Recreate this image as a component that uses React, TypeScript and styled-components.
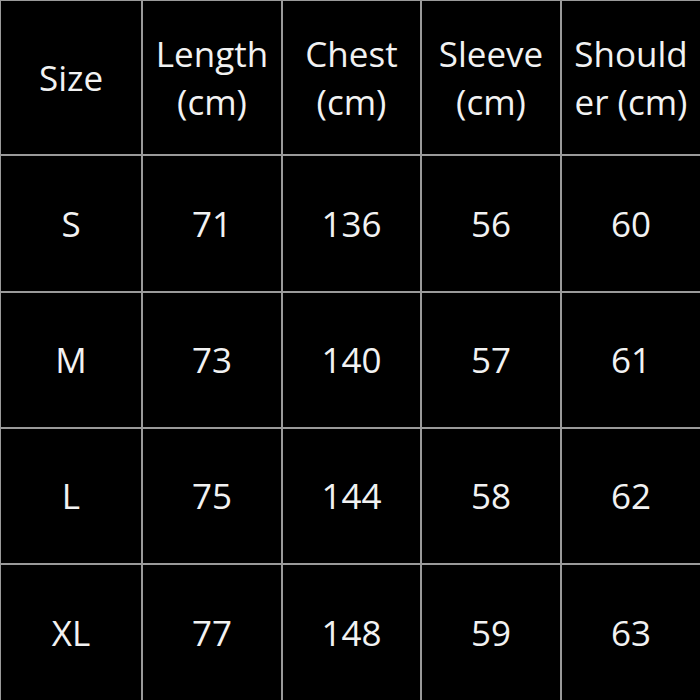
import React from 'react';
import styled, { createGlobalStyle } from 'styled-components';

const GlobalStyle = createGlobalStyle`
  html, body {
    margin: 0;
    padding: 0;
    background: #000;
  }
  body {
    font-family: "Open Sans", "Liberation Sans", sans-serif;
  }
`;

const Table = styled.div`
  width: 700px;
  height: 700px;
  box-sizing: border-box;
  padding: 1px 0 0 1px;
  display: grid;
  grid-template-columns: 140px 138px 137px 138px 138px;
  grid-template-rows: 153px 135px 134px 134px 135px;
  gap: 2px;
  background: #9a9a9a;
`;

const Cell = styled.div<{ $head?: boolean }>`
  background: #000;
  color: #f2f2f2;
  display: flex;
  align-items: center;
  justify-content: center;
  text-align: center;
  font-size: 35px;
  line-height: 48px;
  white-space: nowrap;
`;

const headerLines = [['Size'], ['Length', '(cm)'], ['Chest', '(cm)'], ['Sleeve', '(cm)'], ['Should', 'er (cm)']];

const rows = [
  ['S', '71', '136', '56', '60'],
  ['M', '73', '140', '57', '61'],
  ['L', '75', '144', '58', '62'],
  ['XL', '77', '148', '59', '63'],
];

export default function App() {
  return (
    <>
      <GlobalStyle />
      <Table>
        {headerLines.map((lines, i) => (
          <Cell $head key={i}>
            <div>
              {lines.map((l, j) => (
                <div key={j}>{l}</div>
              ))}
            </div>
          </Cell>
        ))}
        {rows.map(r =>
          r.map((v, i) => <Cell key={r[0] + i}>{v}</Cell>)
        )}
      </Table>
    </>
  );
}
